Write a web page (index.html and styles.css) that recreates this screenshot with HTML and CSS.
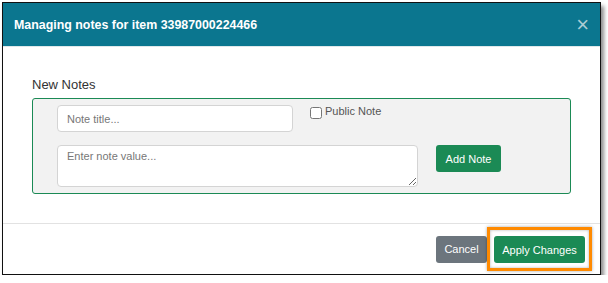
FILE: index.html
```html
<!DOCTYPE html>
<html lang="en">
<head>
    <meta charset="UTF-8">
    <title>Managing notes</title>
    <link rel="stylesheet" href="styles.css">
</head>
<body>

<div class="modal">
    <div class="modal-header">
        <h4>Managing notes for item 33987000224466</h4>
        <span class="close">&times;</span>
    </div>

    <div class="modal-body">
        <div class="section-title">New Notes</div>
        <div class="note-panel">
            <div class="note-row">
                <input type="text" class="note-title" placeholder="Note title...">
                <label class="public"><input type="checkbox"> Public Note</label>
            </div>
            <div class="note-row">
                <textarea class="note-value" placeholder="Enter note value..."></textarea>
                <button type="button" class="btn btn-green add">Add Note</button>
            </div>
        </div>
    </div>

    <div class="modal-footer">
        <button type="button" class="btn btn-gray">Cancel</button>
        <span class="highlight">
            <button type="button" class="btn btn-green">Apply Changes</button>
        </span>
    </div>
</div>

</body>
</html>
```

FILE: styles.css
```css
body {
    margin: 0;
    padding: 2px 0 0 2px;
    background: #ffffff;
    font-family: 'Liberation Sans', Arial, sans-serif;
    color: #333333;
}

.modal {
    width: 597px;
    height: 271px;
    border: 1px solid #111111;
    background: #ffffff;
    box-shadow: 3px 4px 4px rgba(0, 0, 0, 0.45);
    display: flex;
    flex-direction: column;
}

.modal-header {
    flex-shrink: 0;
    height: 44px;
    box-sizing: border-box;
    background: #0b768f;
    border-bottom: 1px solid #dfe8ea;
    display: flex;
    align-items: center;
    justify-content: space-between;
    padding: 0 11px 0 11px;
}

.modal-header h4 {
    margin: 0;
    font-size: 12.4px;
    font-weight: bold;
    color: #ffffff;
}

.close {
    color: #a9ccd4;
    font-size: 22px;
    line-height: 1;
}

.modal-body {
    flex-shrink: 0;
    height: 177px;
    box-sizing: border-box;
    padding: 30px 29px 0 29px;
    border-bottom: 1px solid #e2e2e2;
}

.section-title {
    font-size: 13px;
    color: #333333;
    margin: 0 0 5px 0;
    line-height: 16px;
}

.note-panel {
    border: 1px solid #1b8a55;
    border-radius: 3px;
    background: #f2f2f2;
    padding: 6px 24px 6px 24px;
    display: flex;
    flex-direction: column;
    gap: 13px;
}

.note-row {
    display: flex;
    align-items: flex-start;
}

.note-title {
    width: 236px;
    height: 27px;
    box-sizing: border-box;
    border: 1px solid #d4d4d4;
    border-radius: 4px;
    padding: 0 9px;
    font-family: inherit;
    font-size: 11px;
    margin: 0 17px 0 0;
}

.public {
    font-size: 11px;
    color: #555555;
    display: flex;
    align-items: flex-start;
    gap: 3px;
    line-height: 13px;
}

.public input {
    margin: 2px 0 0 0;
    width: 12px;
    height: 12px;
}

.note-value {
    width: 361px;
    height: 42px;
    box-sizing: border-box;
    border: 1px solid #d4d4d4;
    border-radius: 4px;
    padding: 4px 9px;
    font-family: inherit;
    font-size: 11px;
    margin: 0 18px 0 0;
}

::placeholder {
    color: #777777;
}

.btn {
    border: none;
    border-radius: 3px;
    color: #ffffff;
    font-family: inherit;
    font-size: 11px;
    height: 27px;
    padding: 0 9px;
    cursor: pointer;
}

.btn-green {
    background: #1b8a55;
}

.btn-gray {
    background: #6c757d;
    width: 51px;
    padding: 0;
}

.add {
    width: 65px;
    padding: 0;
}

.modal-footer {
    flex: 1;
    display: flex;
    justify-content: flex-end;
    align-items: center;
    padding: 0 8px 0 0;
}

.highlight {
    display: flex;
    border: 3px solid #ff8a00;
    padding: 6px 4px 5px 4px;
    box-shadow: 0 0 3px rgba(0, 0, 0, 0.35), inset 0 0 3px rgba(0, 0, 0, 0.3);
}

.highlight .btn {
    width: 91px;
    padding: 0;
}
```
